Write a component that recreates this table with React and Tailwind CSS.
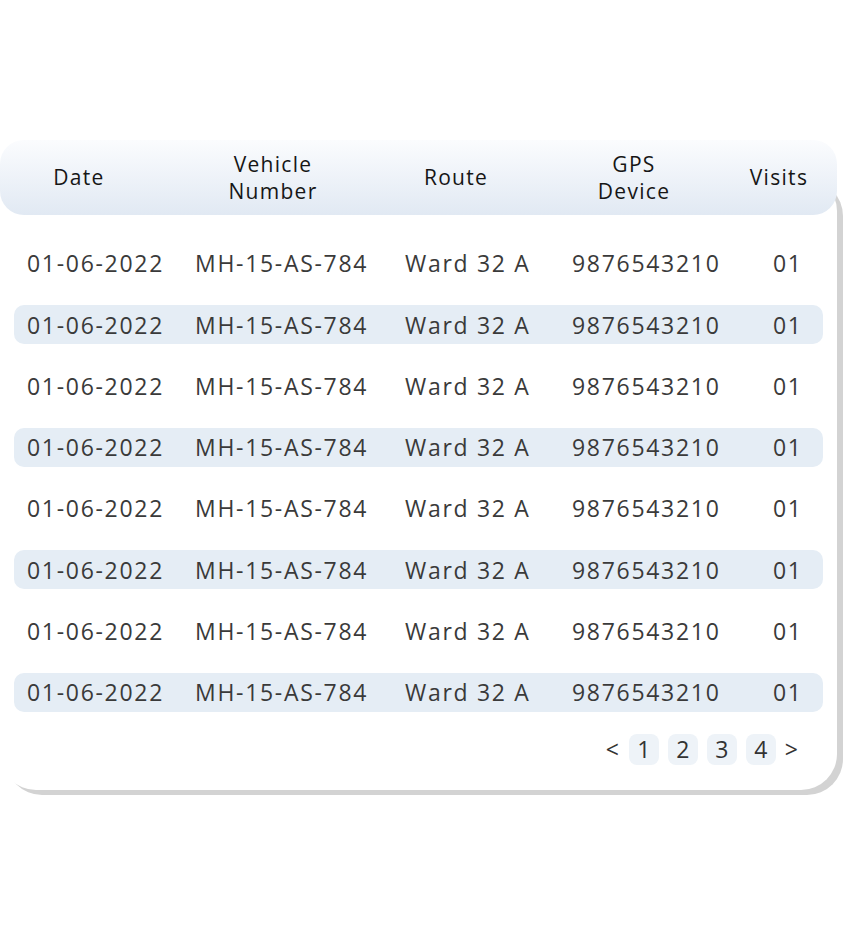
import React from "react";

const rows = Array.from({ length: 8 }, (_, i) => ({
  date: "01-06-2022",
  vehicle: "MH-15-AS-784",
  route: "Ward 32 A",
  gps: "9876543210",
  visits: "01",
  shaded: i % 2 === 1,
}));

export default function App() {
  return (
    <div className="w-full min-h-[935px] bg-white font-['Open_Sans',sans-serif]">
      <div className="w-[837px] pt-[140px]">
        {/* header */}
        <div className="relative z-10 h-[75px] rounded-[24px] bg-gradient-to-b from-[#fbfcfe] to-[#e1e9f3] grid grid-cols-[158px_230px_136px_220px_70px] items-center text-center text-[21px] leading-[27px] tracking-[1.3px] text-[#161616]">
          <div>Date</div>
          <div>
            Vehicle
            <br />
            Number
          </div>
          <div>Route</div>
          <div>
            GPS
            <br />
            Device
          </div>
          <div>Visits</div>
        </div>

        {/* card body */}
        <div className="-mt-[40px] pt-[69px] pb-[23px] rounded-[36px] bg-white shadow-[6px_5px_0_#d3d3d3]">
          <div className="flex flex-col gap-[22.3px] px-[14px]">
            {rows.map((r, i) => (
              <div
                key={i}
                className={`h-[39px] rounded-[10px] pl-[13px] grid grid-cols-[168px_210px_167px_201px_1fr] items-center text-[23px] tracking-[1.7px] text-[#3a3a3a] ${
                  r.shaded ? "bg-[#e5edf5]" : ""
                }`}
              >
                <div>{r.date}</div>
                <div>{r.vehicle}</div>
                <div>{r.route}</div>
                <div>{r.gps}</div>
                <div>{r.visits}</div>
              </div>
            ))}
          </div>

          <div className="mt-[20px] pr-[39px] flex justify-end items-center gap-[9px] text-[23px] text-[#333]">
            <span className="mr-[1px]">&lt;</span>
            {[1, 2, 3, 4].map((n) => (
              <span
                key={n}
                className="w-[30px] h-[31px] rounded-[8px] bg-[#eef3f8] flex items-center justify-center"
              >
                {n}
              </span>
            ))}
            <span>&gt;</span>
          </div>
        </div>
      </div>
    </div>
  );
}
